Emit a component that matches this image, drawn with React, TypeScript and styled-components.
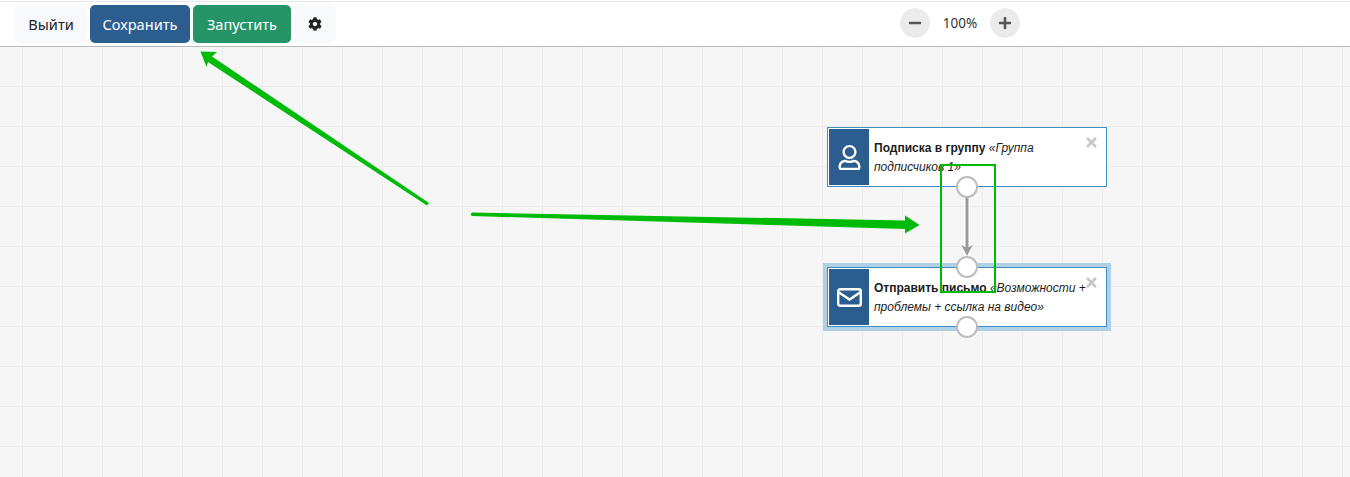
import styled, { createGlobalStyle } from 'styled-components';
import { FaCog, FaMinus, FaPlus, FaRegUser, FaTimes } from 'react-icons/fa';

import type { FunctionComponent, ReactNode } from 'react';

const GlobalStyle = createGlobalStyle`
  html, body {
    margin: 0;
    padding: 0;
    height: 100%;
    overflow: hidden;
    background: #fff;
  }

  #root {
    height: 100%;
  }
`;

const Page = styled.div`
  position: relative;
  display: flex;
  flex-direction: column;
  width: 1350px;
  height: 477px;
  overflow: hidden;
`;

const Toolbar = styled.div`
  box-sizing: border-box;
  display: flex;
  align-items: center;
  flex: 0 0 46px;
  padding: 0 0 0 15px;
  background: #fff;
  border-top: 1px solid #e6e6e6;
  border-bottom: 1px solid #bbb;
  margin-top: 1px;
`;

const ButtonGroup = styled.div`
  display: flex;
  gap: 3px;
`;

const Button = styled.button<{ $bg: string; $color: string; $width: number }>`
  box-sizing: border-box;
  width: ${({ $width }) => $width}px;
  height: 38px;
  padding: 0 0 1px;
  border: 0;
  border-radius: 5px;
  background: ${({ $bg }) => $bg};
  color: ${({ $color }) => $color};
  font: 400 14.6px "Noto Sans", "Open Sans", sans-serif;
  display: flex;
  align-items: center;
  justify-content: center;
`;

const ZoomControls = styled.div`
  display: flex;
  align-items: center;
  margin: -2px 0 0 564px;
`;

const ZoomButton = styled.div`
  display: flex;
  align-items: center;
  justify-content: center;
  width: 30px;
  height: 30px;
  border-radius: 50%;
  background: #ebebeb;
  color: #555;
  font-size: 14px;
`;

const ZoomValue = styled.span`
  width: 60px;
  text-align: center;
  color: #333;
  font: 400 13.5px "Noto Sans", "Open Sans", sans-serif;
`;

const Canvas = styled.div`
  position: relative;
  flex: 1;
  background-color: #f6f6f6;
  background-image:
    linear-gradient(to right, #ececec 1px, transparent 1px),
    linear-gradient(to bottom, #ececec 1px, transparent 1px);
  background-size: 40px 40px;
  background-position: 22px 39px;
`;

const Connector = styled.svg`
  position: absolute;
  left: 957px;
  top: 150px;
`;

const NodeCard = styled.div<{ $top: number; $active?: boolean }>`
  box-sizing: border-box;
  position: absolute;
  left: 827px;
  top: ${({ $top }) => $top}px;
  display: flex;
  width: 280px;
  height: 60px;
  padding: 1px;
  background: #fff;
  border: 1px solid #3f8dc5;
  box-shadow: ${({ $active }) => ($active ? '0 0 0 4px #afd0e5' : 'none')};
`;

const NodeIcon = styled.div`
  display: flex;
  align-items: center;
  justify-content: center;
  flex: 0 0 40px;
  background: #2b5d8f;
  color: #fff;
`;

const NodeText = styled.div`
  padding: 10px 16px 0 5px;
  color: #1c1c1c;
  font: 400 12px/19px "Liberation Sans", Arial, sans-serif;

  b {
    font-weight: 700;
  }

  i {
    font-style: italic;
  }
`;

const CloseIcon = styled.div`
  position: absolute;
  top: 7px;
  right: 7px;
  display: flex;
  color: #c9c9c9;
  font-size: 15px;
`;

const Port = styled.div<{ $edge: 'top' | 'bottom' }>`
  box-sizing: border-box;
  position: absolute;
  left: 128px;
  ${({ $edge }) => $edge}: -12px;
  width: 22px;
  height: 22px;
  border: 2px solid #bdbdbd;
  border-radius: 50%;
  background: #fff;
`;

const Annotations = styled.svg`
  position: absolute;
  left: 0;
  top: 0;
  pointer-events: none;
`;

const EnvelopeIcon: FunctionComponent = () => (
  <svg width="25" height="19" viewBox="0 0 25 19" fill="none" stroke="#fff" strokeWidth="2.4">
    <rect x="1.2" y="1.2" width="22.6" height="16.6" rx="2" />
    <path d="M2 4.5L12.5 11.5L23 4.5" />
  </svg>
);

type FlowNodeProps = Readonly<{
  top: number;
  active?: boolean;
  icon: ReactNode;
  ports: ReadonlyArray<'top' | 'bottom'>;
  title: string;
  detail: string;
}>;

const FlowNode: FunctionComponent<FlowNodeProps> = ({ top, active, icon, ports, title, detail }) => (
  <NodeCard $top={top} $active={active}>
    <NodeIcon>{icon}</NodeIcon>
    <NodeText>
      <b>{title}</b> <i>{detail}</i>
    </NodeText>
    <CloseIcon>
      <FaTimes />
    </CloseIcon>
    {ports.map(edge => (
      <Port key={edge} $edge={edge} />
    ))}
  </NodeCard>
);

const App: FunctionComponent = () => (
  <Page>
    <GlobalStyle />
    <Toolbar>
      <ButtonGroup>
        <Button $bg="#f8f9fa" $color="#212529" $width={72}>Выйти</Button>
        <Button $bg="#2b5d8f" $color="#fff" $width={100}>Сохранить</Button>
        <Button $bg="#259467" $color="#fff" $width={98}>Запустить</Button>
        <Button $bg="#f8f9fa" $color="#212529" $width={42}>
          <FaCog size={14} />
        </Button>
      </ButtonGroup>
      <ZoomControls>
        <ZoomButton>
          <FaMinus />
        </ZoomButton>
        <ZoomValue>100%</ZoomValue>
        <ZoomButton>
          <FaPlus />
        </ZoomButton>
      </ZoomControls>
    </Toolbar>
    <Canvas>
      <Connector width="20" height="70" viewBox="0 0 20 70">
        <line x1="10" y1="0" x2="10" y2="60" stroke="#fff" strokeWidth="6" />
        <path d="M10 0V54" stroke="#9a9a9a" strokeWidth="3" fill="none" />
        <polygon points="4.5,48 10,51 15.5,48 10,59" fill="#9a9a9a" />
      </Connector>
      <FlowNode
        top={80}
        icon={<FaRegUser size={25} />}
        ports={['bottom']}
        title="Подписка в группу"
        detail="«Группа подписчиков 1»"
      />
      <FlowNode
        top={220}
        active
        icon={<EnvelopeIcon />}
        ports={['top', 'bottom']}
        title="Отправить письмо"
        detail="«Возможности + проблемы + ссылка на видео»"
      />
    </Canvas>
    <Annotations width="1350" height="477" viewBox="0 0 1350 477">
      <polygon
        points="200.5,51.5 217,52 212,56.5 429,203 427,205.5 208,62 206.5,67"
        fill="#00ba08"
      />
      <polygon
        points="472,212.5 905,220.5 905,215.5 919.5,225 905,233.5 905,229 472,216 470.5,214.5"
        fill="#00ba08"
      />
      <rect x="941" y="165" width="54" height="127" fill="none" stroke="#00ba08" strokeWidth="2" />
    </Annotations>
  </Page>
);

export default App;
